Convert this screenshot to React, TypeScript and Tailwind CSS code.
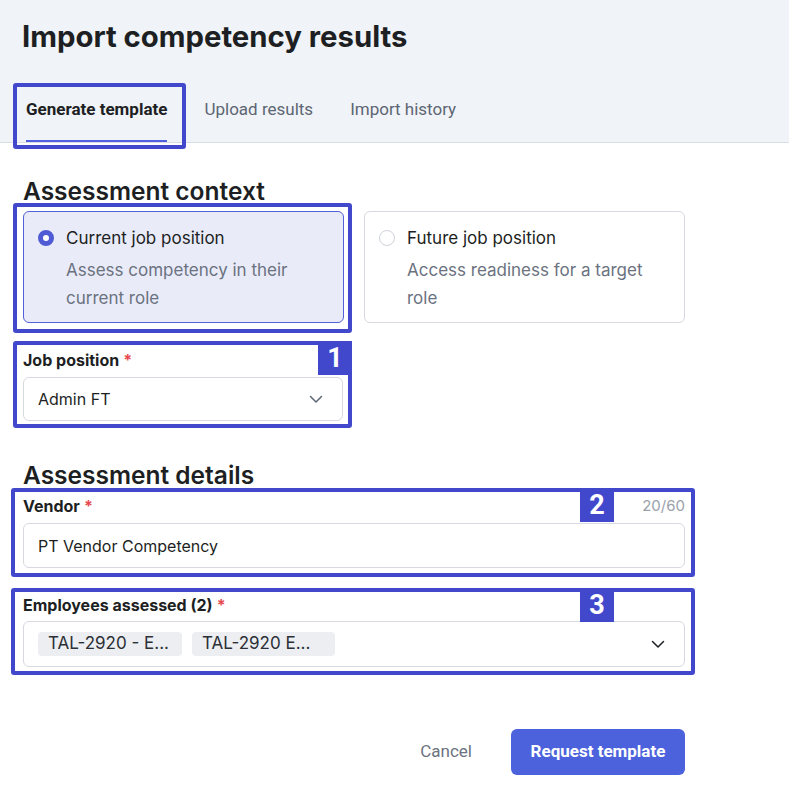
import React from "react";

const INTER = { fontFamily: "Inter, 'Noto Sans', sans-serif" };
const ROBOTO = { fontFamily: "Roboto, 'Liberation Sans', sans-serif" };

function Chevron({ className = "" }: { className?: string }) {
  return (
    <svg width="16" height="16" viewBox="0 0 16 16" fill="none" className={className}>
      <path d="M2.5 5.5L8 11l5.5-5.5" stroke="currentColor" strokeWidth="1.5" strokeLinecap="round" strokeLinejoin="round" />
    </svg>
  );
}

function Marker({ className, badge, badgeClass }: { className: string; badge?: string; badgeClass?: string }) {
  return (
    <div className={`pointer-events-none absolute rounded-[3px] border-4 border-[#4148cc] ${className}`}>
      {badge && (
        <div
          className={`absolute -top-[4px] flex h-[34px] w-[34px] items-center justify-center bg-[#4148cc] text-[27px] font-bold leading-none text-white ${badgeClass}`}
          style={ROBOTO}
        >
          {badge}
        </div>
      )}
    </div>
  );
}

function Required() {
  return <span className="ml-[4px] text-[#e5484d]">*</span>;
}

export default function App() {
  return (
    <div className="min-h-[789px] w-[789px] bg-white text-[#1f2328]" style={INTER}>
      <header className="border-b border-[#d9dde4] bg-[#f0f3f8] px-[22px] pt-[19px]">
        <h1 className="text-[29.3px] font-bold leading-[36px] text-[#1d1f23]">Import competency results</h1>
        <nav className="ml-[4px] mt-[28px] flex gap-[37px]" style={ROBOTO}>
          <div className="relative">
            <div className="border-b-2 border-[#5060e0] pb-[21px] pt-[16px] text-[17px] font-bold leading-[20px] text-[#1d1f23]">
              Generate template
            </div>
            <Marker className="-left-[13px] -right-[19px] top-0 -bottom-[7px]" />
          </div>
          <div className="pb-[23px] pt-[16px] text-[17px] leading-[20px] text-[#5d6673]">Upload results</div>
          <div className="pb-[23px] pt-[16px] text-[17px] leading-[20px] text-[#5d6673]">Import history</div>
        </nav>
      </header>

      <main className="ml-[23px] w-[662px] pt-[32px]">
        <h2 className="text-[24.5px] font-semibold leading-[32px] text-[#1d1f23]">Assessment context</h2>

        <div className="mt-[4px] grid grid-cols-2 gap-[20px]">
          <div className="relative">
            <div className="flex h-[112px] gap-[12px] rounded-[6px] border border-[#5361d8] bg-[#e9ebf9] pl-[14px] pr-[14px] pt-[14px]">
              <span className="mt-[4px] h-[16px] w-[16px] shrink-0 rounded-full border-[5px] border-[#4f5bd5] bg-white" />
              <div>
                <div className="text-[17px] leading-[24px] text-[#1d1f23]">Current job position</div>
                <div className="mt-[6px] text-[17px] leading-[28px] text-[#6b7280]">
                  Assess competency in their
                  <br />
                  current role
                </div>
              </div>
            </div>
            <Marker className="-left-[10px] -right-[8px] -top-[8px] -bottom-[10px]" />
          </div>
          <div className="flex h-[112px] gap-[12px] rounded-[6px] border border-[#d6d9df] bg-white pl-[14px] pr-[14px] pt-[14px]">
            <span className="mt-[4px] h-[16px] w-[16px] shrink-0 rounded-full border border-[#cfd3da] bg-white" />
            <div>
              <div className="text-[17px] leading-[24px] text-[#1d1f23]">Future job position</div>
              <div className="mt-[6px] text-[17px] leading-[28px] text-[#6b7280]">
                Access readiness for a target
                <br />
                role
              </div>
            </div>
          </div>
        </div>

        <div className="relative mt-[27px] w-[320px]">
          <label className="block text-[16px] font-bold leading-[20px] text-[#1d1f23]">
            Job position
            <Required />
          </label>
          <div className="mt-[7px] flex h-[44px] items-center justify-between rounded-[6px] border border-[#d6d9df] bg-white pl-[14px] pr-[18px]">
            <span className="text-[16px] text-[#1d1f23]">Admin FT</span>
            <Chevron className="text-[#5d6673]" />
          </div>
          <Marker className="-left-[10px] -right-[9px] -top-[9px] -bottom-[7px]" badge="1" badgeClass="-right-[4px]" />
        </div>

        <h2 className="mt-[38px] text-[24.5px] font-semibold leading-[32px] text-[#1d1f23]">Assessment details</h2>

        <div className="relative mt-[5px]">
          <div className="flex items-center justify-between">
            <label className="block text-[16px] font-bold leading-[20px] text-[#1d1f23]">
              Vendor
              <Required />
            </label>
            <span className="text-[15px] leading-[20px] text-[#9aa1ab]">20/60</span>
          </div>
          <div className="mt-[7px] flex h-[45px] items-center rounded-[6px] border border-[#d6d9df] bg-white px-[14px]">
            <span className="text-[16px] text-[#1d1f23]">PT Vendor Competency</span>
          </div>
          <Marker className="-left-[12px] -right-[10px] -top-[8px] -bottom-[9px]" badge="2" badgeClass="right-[77px]" />
        </div>

        <div className="relative mt-[27px]">
          <label className="block text-[16px] font-bold leading-[20px] text-[#1d1f23]">
            Employees assessed (2)
            <Required />
          </label>
          <div className="mt-[6px] flex h-[46px] items-center justify-between rounded-[6px] border border-[#d6d9df] bg-white pl-[14px] pr-[18px]">
            <div className="flex gap-[10px]">
              <span className="flex h-[24px] w-[144px] items-center rounded-[4px] bg-[#eceef1] px-[10px] text-[17px] text-[#2b2f36]">
                TAL-2920 - E...
              </span>
              <span className="flex h-[24px] w-[143px] items-center rounded-[4px] bg-[#eceef1] px-[10px] text-[17px] text-[#2b2f36]">
                TAL-2920 E...
              </span>
            </div>
            <Chevron className="text-[#1d1f23]" />
          </div>
          <Marker className="-left-[12px] -right-[10px] -top-[7px] -bottom-[8px]" badge="3" badgeClass="right-[77px]" />
        </div>

        <div className="mt-[62px] flex justify-end gap-[19px]" style={ROBOTO}>
          <button className="h-[46px] px-[20px] text-[17px] text-[#6b7280]">Cancel</button>
          <button className="h-[46px] w-[174px] rounded-[6px] bg-[#4c62dc] text-[17px] font-bold text-white">
            Request template
          </button>
        </div>
      </main>
    </div>
  );
}
